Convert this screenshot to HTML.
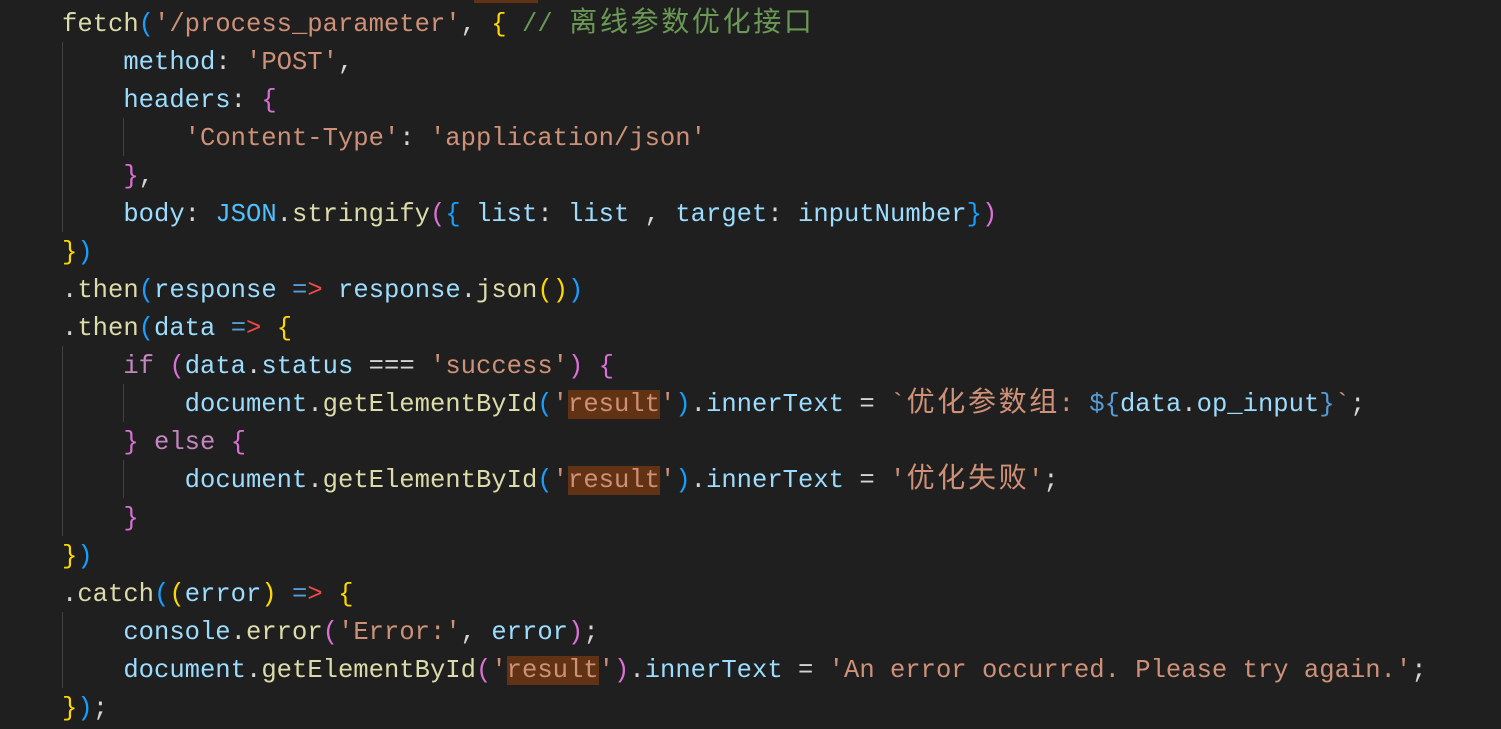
<!DOCTYPE html>
<html><head><meta charset="utf-8"><style>
body{margin:0;background:#1f1f1f;width:1501px;height:729px;overflow:hidden;position:relative}
pre{margin:0;position:absolute;left:62px;top:6px;font-family:"Liberation Mono","Noto Sans CJK SC",monospace;font-size:25.55px;line-height:38px;color:#d4d4d4}
.c{display:inline-block;width:30.66px;text-align:center;font-size:28px;line-height:30px;vertical-align:baseline}
.f{color:#dcdcaa}.v{color:#9cdcfe}.s{color:#ce9178}.cm{color:#6a9955}.y{color:#ffd700}.p{color:#da70d6}.b{color:#179fff}.k{color:#c586c0}.j{color:#4fc1ff}.o{color:#569cd6}.r{color:#f44747}
.h{background:#613214}
.g{position:absolute;width:1px;background:#404040}
</style></head><body>
<div style="position:absolute;left:474px;top:0;width:64px;height:3px;background:#613214"></div>
<div class="g" style="left:62px;top:42px;height:190px"></div>
<div class="g" style="left:123px;top:118px;height:38px"></div>
<div class="g" style="left:62px;top:346px;height:190px"></div>
<div class="g" style="left:123px;top:384px;height:38px"></div>
<div class="g" style="left:123px;top:460px;height:38px"></div>
<div class="g" style="left:62px;top:612px;height:76px"></div>
<pre><span class="f">fetch</span><span class="b">(</span><span class="s">'/process_parameter'</span>, <span class="y">{</span> <span class="cm">// <span class="c">离</span><span class="c">线</span><span class="c">参</span><span class="c">数</span><span class="c">优</span><span class="c">化</span><span class="c">接</span><span class="c">口</span></span>
    <span class="v">method</span>: <span class="s">'POST'</span>,
    <span class="v">headers</span>: <span class="p">{</span>
        <span class="s">'Content-Type'</span>: <span class="s">'application/json'</span>
    <span class="p">}</span>,
    <span class="v">body</span>: <span class="j">JSON</span>.<span class="f">stringify</span><span class="p">(</span><span class="b">{</span> <span class="v">list</span>: <span class="v">list</span> , <span class="v">target</span>: <span class="v">inputNumber</span><span class="b">}</span><span class="p">)</span>
<span class="y">}</span><span class="b">)</span>
.<span class="f">then</span><span class="b">(</span><span class="v">response</span> <span class="o">=</span><span class="r">&gt;</span> <span class="v">response</span>.<span class="f">json</span><span class="y">()</span><span class="b">)</span>
.<span class="f">then</span><span class="b">(</span><span class="v">data</span> <span class="o">=</span><span class="r">&gt;</span> <span class="y">{</span>
    <span class="k">if</span> <span class="p">(</span><span class="v">data</span>.<span class="v">status</span> === <span class="s">'success'</span><span class="p">)</span> <span class="p">{</span>
        <span class="v">document</span>.<span class="f">getElementById</span><span class="b">(</span><span class="s">'<span class="h">result</span>'</span><span class="b">)</span>.<span class="v">innerText</span> = <span class="s">`<span class="c">优</span><span class="c">化</span><span class="c">参</span><span class="c">数</span><span class="c">组</span>: </span><span class="o">${</span><span class="v">data</span>.<span class="v">op_input</span><span class="o">}</span><span class="s">`</span>;
    <span class="p">}</span> <span class="k">else</span> <span class="p">{</span>
        <span class="v">document</span>.<span class="f">getElementById</span><span class="b">(</span><span class="s">'<span class="h">result</span>'</span><span class="b">)</span>.<span class="v">innerText</span> = <span class="s">'<span class="c">优</span><span class="c">化</span><span class="c">失</span><span class="c">败</span>'</span>;
    <span class="p">}</span>
<span class="y">}</span><span class="b">)</span>
.<span class="f">catch</span><span class="b">(</span><span class="y">(</span><span class="v">error</span><span class="y">)</span> <span class="o">=</span><span class="r">&gt;</span> <span class="y">{</span>
    <span class="v">console</span>.<span class="f">error</span><span class="p">(</span><span class="s">'Error:'</span>, <span class="v">error</span><span class="p">)</span>;
    <span class="v">document</span>.<span class="f">getElementById</span><span class="p">(</span><span class="s">'<span class="h">result</span>'</span><span class="p">)</span>.<span class="v">innerText</span> = <span class="s">'An error occurred. Please try again.'</span>;
<span class="y">}</span><span class="b">)</span>;</pre>
</body></html>
